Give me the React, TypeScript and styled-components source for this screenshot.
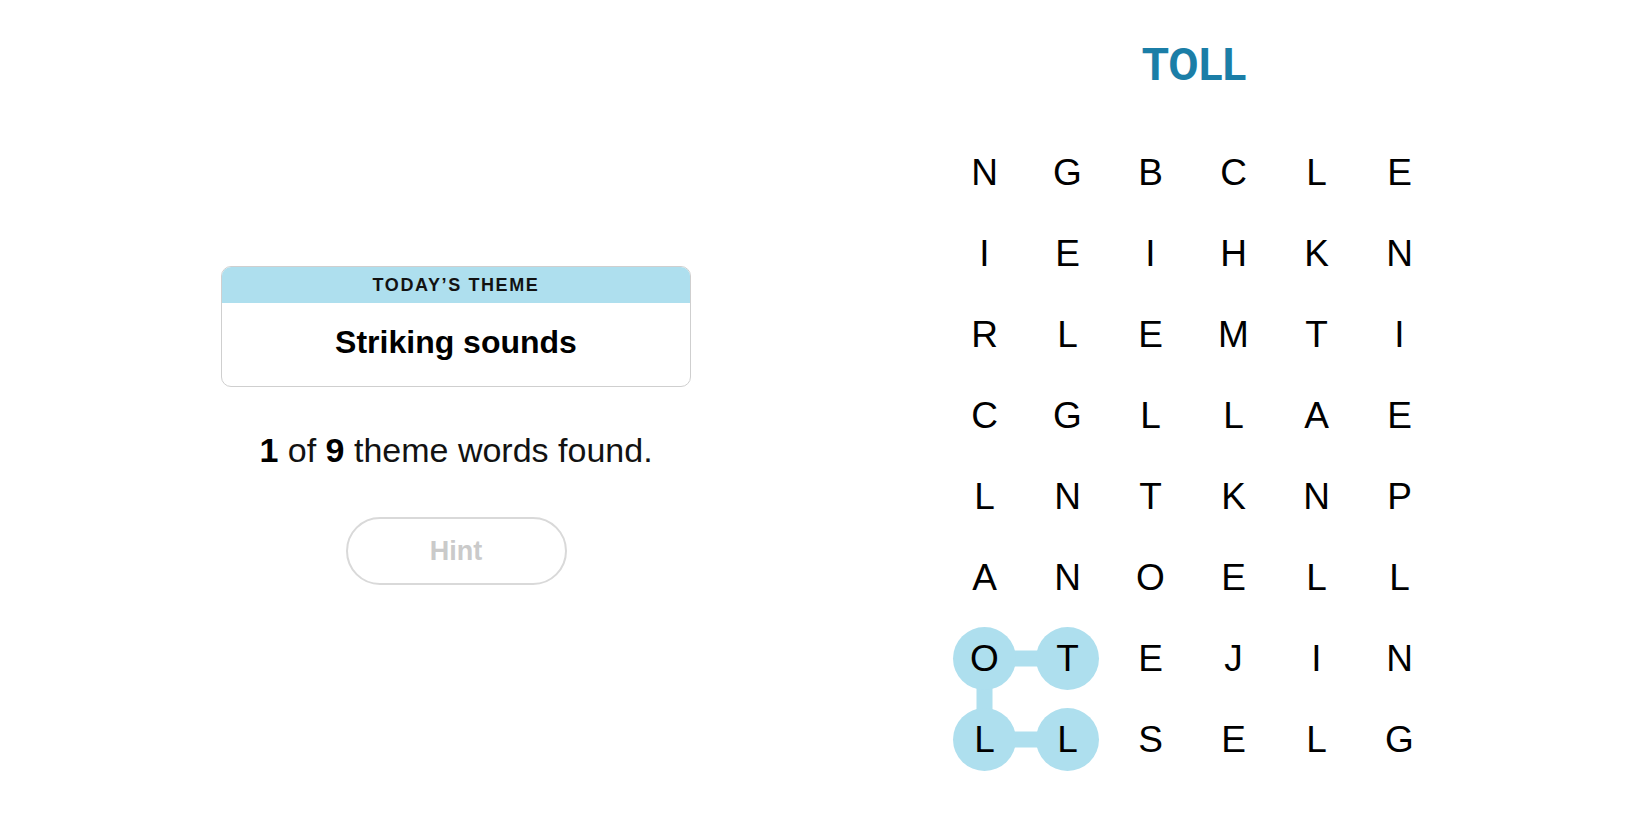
import styled, { createGlobalStyle } from "styled-components";

const GlobalStyle = createGlobalStyle`
    html, body {
        margin: 0;
        padding: 0;
        background: #ffffff;
    }
    body {
        font-family: "Liberation Sans", Arial, sans-serif;
        color: #121212;
    }
`;

const CELL_W = 83;
const CELL_H = 81;
const HIGHLIGHT = "#aedfee";

const BOARD = [
    "NGBCLE",
    "IEIHKN",
    "RLEMTI",
    "CGLLAE",
    "LNTKNP",
    "ANOELL",
    "OTEJIN",
    "LLSELG",
];

// found word TOLL, in the order it was traced: [col, row]
const FOUND: [number, number][] = [
    [1, 6],
    [0, 6],
    [0, 7],
    [1, 7],
];

const Page = styled.main`
    display: flex;
    align-items: flex-start;
    width: 1650px;
    height: 825px;
    padding-left: 221px;
    box-sizing: border-box;
    gap: 252px;
`;

const LeftPanel = styled.section`
    width: 470px;
    margin-top: 266px;
    display: flex;
    flex-direction: column;
    align-items: center;
`;

const ThemeCard = styled.div`
    width: 100%;
    border: 1px solid #cfcfcf;
    border-radius: 10px;
    overflow: hidden;
    box-sizing: border-box;
`;

const ThemeHeader = styled.div`
    height: 36px;
    background-color: ${HIGHLIGHT};
    display: flex;
    align-items: center;
    justify-content: center;
    font-size: 18px;
    font-weight: 700;
    letter-spacing: 1.6px;
    color: #121212;
`;

const ThemeBody = styled.div`
    padding: 20px 0 25px;
    text-align: center;
    font-size: 32px;
    line-height: 1.2;
    font-weight: 700;
    color: #000;
`;

const Progress = styled.p`
    margin: 44px 0 0;
    font-size: 34px;
    line-height: 39px;
    color: #121212;
    b {
        font-weight: 700;
        color: #000;
    }
`;

const HintButton = styled.button`
    margin-top: 47px;
    width: 221px;
    height: 68px;
    border: 2px solid #d9d9d9;
    border-radius: 34px;
    background: #fff;
    color: #cacaca;
    font-family: "Liberation Sans", Arial, sans-serif;
    font-size: 27px;
    font-weight: 700;
    cursor: default;
`;

const RightPanel = styled.section`
    width: ${CELL_W * 6}px;
    padding-top: 43px;
    display: flex;
    flex-direction: column;
    align-items: center;
`;

const Found = styled.h2`
    margin: 0 0 45px 4px;
    font-family: Roboto, "Liberation Sans", sans-serif;
    font-size: 44px;
    line-height: 1;
    font-weight: 700;
    color: #1b7ea7;
`;

const Board = styled.div`
    position: relative;
    display: grid;
    grid-template-columns: repeat(6, ${CELL_W}px);
    grid-auto-rows: ${CELL_H}px;
`;

const Trace = styled.svg`
    position: absolute;
    inset: 0;
    pointer-events: none;
`;

const Cell = styled.div`
    position: relative;
    display: flex;
    align-items: center;
    justify-content: center;
    font-size: 37px;
    color: #000;
`;

const center = ([c, r]: [number, number]) => ({
    x: c * CELL_W + CELL_W / 2,
    y: r * CELL_H + CELL_H / 2,
});

function App() {
    const pts = FOUND.map(center);
    const line = pts.map((p) => `${p.x},${p.y}`).join(" ");

    return (
        <>
            <GlobalStyle />
            <Page>
                <LeftPanel>
                    <ThemeCard>
                        <ThemeHeader>TODAY’S THEME</ThemeHeader>
                        <ThemeBody>Striking sounds</ThemeBody>
                    </ThemeCard>
                    <Progress>
                        <b>1</b> of <b>9</b> theme words found.
                    </Progress>
                    <HintButton>Hint</HintButton>
                </LeftPanel>
                <RightPanel>
                    <Found>TOLL</Found>
                    <Board>
                        <Trace width={CELL_W * 6} height={CELL_H * 8}>
                            <polyline points={line} fill="none" stroke={HIGHLIGHT} strokeWidth={16} />
                            {pts.map((p, i) => (
                                <circle key={i} cx={p.x} cy={p.y} r={31.5} fill={HIGHLIGHT} />
                            ))}
                        </Trace>
                        {BOARD.map((row, r) =>
                            row.split("").map((ch, c) => <Cell key={`${r}-${c}`}>{ch}</Cell>)
                        )}
                    </Board>
                </RightPanel>
            </Page>
        </>
    );
}

export default App;
